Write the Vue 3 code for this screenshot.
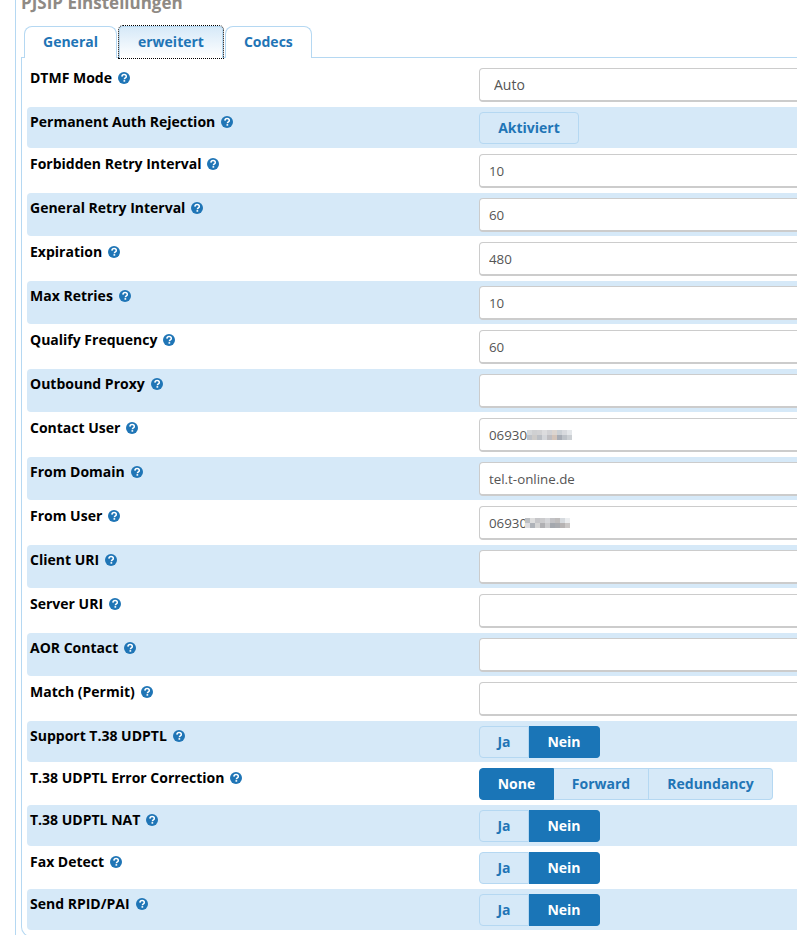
<template>
  <div class="page">
    <div class="fieldset">
      <h3 class="title">PJSIP Einstellungen</h3>
      <ul class="tabs">
        <li class="tab">General</li>
        <li class="tab active">erweitert</li>
        <li class="tab">Codecs</li>
      </ul>
      <div class="panel">
        <div v-for="row in rows" :key="row.label" class="row">
          <div class="label">
            <span>{{ row.label }}</span>
            <svg class="help" viewBox="0 0 12 12">
              <circle cx="6" cy="6" r="6" fill="#1f75b6" />
              <path d="M3.9 4.6C4 3.300 4.900 2.600 6.100 2.600c1.300 0 2.200.7 2.200 1.800 0 1.600-1.900 1.500-1.900 2.900" fill="none" stroke="#fff" stroke-width="1.500" />
              <rect x="5.500" y="8.100" width="1.700" height="1.600" fill="#fff" />
            </svg>
          </div>
          <div class="control">
            <select v-if="row.type === 'select'" class="select">
              <option>{{ row.value }}</option>
            </select>
            <div v-else-if="row.type === 'input'" class="field">
              <input class="input" type="text" :value="row.value" />
              <div v-if="row.blur" class="blur" :style="{ left: row.blurLeft + 'px' }">
                <i v-for="(c, i) in row.blur" :key="i" :style="{ background: c }"></i>
              </div>
            </div>
            <div v-else class="btn-group">
              <button
                v-for="opt in row.options"
                :key="opt"
                :class="['btn', { on: opt === row.value }]"
                :style="row.widths ? { width: row.widths[opt] + 'px' } : null"
              >{{ opt }}</button>
            </div>
          </div>
        </div>
      </div>
    </div>
  </div>
</template>

<script setup>
const yesNo = ['Ja', 'Nein']
const yesNoWidths = { Ja: 50, Nein: 71 }

const rows = [
  { label: 'DTMF Mode', type: 'select', value: 'Auto' },
  { label: 'Permanent Auth Rejection', type: 'buttons', options: ['Aktiviert'], value: '', widths: { Aktiviert: 100 } },
  { label: 'Forbidden Retry Interval', type: 'input', value: '10' },
  { label: 'General Retry Interval', type: 'input', value: '60' },
  { label: 'Expiration', type: 'input', value: '480' },
  { label: 'Max Retries', type: 'input', value: '10' },
  { label: 'Qualify Frequency', type: 'input', value: '60' },
  { label: 'Outbound Proxy', type: 'input', value: '' },
  {
    label: 'Contact User', type: 'input', value: '069308', blurLeft: 48,
    blur: [
      '#d6d8da', '#cfd0d2', '#d2d2d4', '#dcdcde', '#d2d2d5', '#dcd5d0', '#cbd0d5', '#d8dade', '#e4e7ea',
      '#bfc3c9', '#cdcbc9', '#bbbfc5', '#d4d6da', '#bfbec2', '#d3c4ba', '#a7acb5', '#bdc2c8', '#ccd0d4',
    ],
  },
  { label: 'From Domain', type: 'input', value: 'tel.t-online.de' },
  {
    label: 'From User', type: 'input', value: '06930', blurLeft: 46,
    blur: [
      '#bcbfc3', '#dedede', '#c6c6c9', '#cbcbcd', '#d6d7da', '#c2c2c5', '#bfbdbd', '#d6dade', '#eceef0',
      '#dcdcdf', '#aeb2b8', '#d4d4d4', '#b0b0b3', '#cbcbcd', '#a4a8ae', '#a9abaf', '#b6b3b3', '#cac7c6',
    ],
  },
  { label: 'Client URI', type: 'input', value: '' },
  { label: 'Server URI', type: 'input', value: '' },
  { label: 'AOR Contact', type: 'input', value: '' },
  { label: 'Match (Permit)', type: 'input', value: '' },
  { label: 'Support T.38 UDPTL', type: 'buttons', options: yesNo, value: 'Nein', widths: yesNoWidths },
  {
    label: 'T.38 UDPTL Error Correction', type: 'buttons', options: ['None', 'Forward', 'Redundancy'], value: 'None',
    widths: { None: 75, Forward: 95, Redundancy: 124 },
  },
  { label: 'T.38 UDPTL NAT', type: 'buttons', options: yesNo, value: 'Nein', widths: yesNoWidths },
  { label: 'Fax Detect', type: 'buttons', options: yesNo, value: 'Nein', widths: yesNoWidths },
  { label: 'Send RPID/PAI', type: 'buttons', options: yesNo, value: 'Nein', widths: yesNoWidths },
]
</script>

<style>
html,
body {
  overflow: hidden;
  background: #fff;
}
</style>

<style scoped>
.page {
  width: 1000px;
  height: 935px;
  overflow: hidden;
  padding-left: 15px;
  box-sizing: border-box;
  font-family: "Open Sans", sans-serif;
  font-size: 14px;
}

.fieldset {
  border-left: 1px solid #b5d8f2;
  padding: 0 0 0 5px;
  height: 960px;
}

.title {
  margin: -8px 0 0;
  height: 34px;
  font-size: 17px;
  line-height: 22px;
  font-weight: 700;
  color: #8f8a85;
}

.tabs {
  display: flex;
  list-style: none;
  margin: 0 0 0 3px;
  padding: 0;
  gap: 2px;
  height: 31px;
}

.tab {
  box-sizing: border-box;
  height: 32px;
  padding: 5px 18px 0;
  border: 1px solid #b5d8f2;
  border-bottom: none;
  border-radius: 8px 8px 0 0;
  background: #fff;
  color: #1f75b6;
  font-weight: 700;
  line-height: 20px;
  position: relative;
  z-index: 1;
}

.tab.active {
  background: linear-gradient(#d6e9f8, #fff);
  outline: 1px dotted #000;
  outline-offset: 0;
  border-radius: 4px 4px 0 0;
}

.panel {
  border: 1px solid #b5d8f2;
  border-right: none;
  border-radius: 0 0 0 10px;
  padding: 5px 0 0 5px;
  height: 880px;
  box-sizing: border-box;
}

.row {
  display: flex;
  padding: 5px 0 4px;
  margin-bottom: 1px;
  border-radius: 4px;
}

.row:nth-child(even) {
  background: #d6e9f8;
}

.label {
  width: 452px;
  flex: none;
  box-sizing: border-box;
  padding-left: 3px;
  color: #000;
  font-weight: 700;
  line-height: 20px;
}

.help {
  width: 12px;
  height: 12px;
  margin-left: 6px;
  vertical-align: -1px;
}

.control {
  flex: 1;
}

.field {
  position: relative;
}

.input,
.select {
  display: block;
  width: 100%;
  height: 34px;
  box-sizing: border-box;
  border: 1px solid #ccc;
  border-bottom-width: 2px;
  border-radius: 4px;
  background: #fff;
  font-family: inherit;
  font-size: 13.33px;
  color: #555;
  padding: 0 9px;
  outline: none;
}

.select {
  appearance: none;
  font-size: 14px;
  padding-left: 14px;
}

.blur {
  position: absolute;
  top: 12px;
  display: grid;
  grid-template-columns: repeat(9, 5px);
  grid-auto-rows: 5px;
}

.blur i {
  display: block;
}

.btn-group {
  display: flex;
  height: 32px;
}

.btn {
  box-sizing: border-box;
  height: 32px;
  padding: 0 0 2px;
  border: 1px solid #b5d8f2;
  border-left-width: 0;
  background: #d6e9f8;
  color: #1f75b6;
  font-family: inherit;
  font-size: 14px;
  font-weight: 700;
}

.btn:first-child {
  border-left-width: 1px;
  border-radius: 4px 0 0 4px;
}

.btn:last-child {
  border-radius: 0 4px 4px 0;
}

.btn:only-child {
  border-radius: 4px;
}

.btn.on {
  background: #1a75b7;
  border-color: #1a75b7;
  color: #fff;
}
</style>
